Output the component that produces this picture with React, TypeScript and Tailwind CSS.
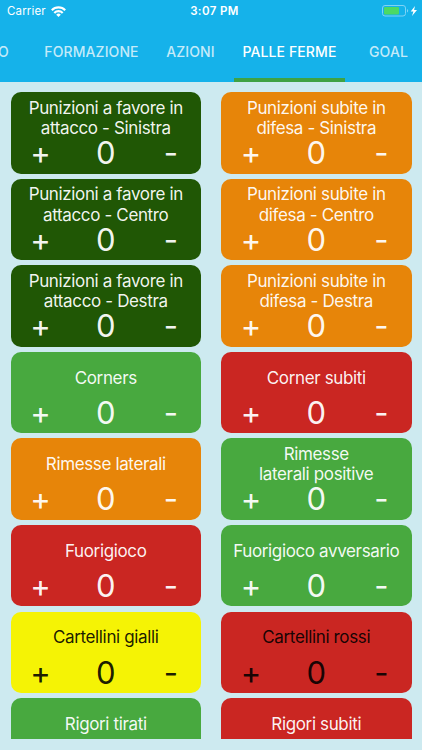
type Tone = "forest" | "green" | "orange" | "red" | "yellow";

type Counter = {
  title: string;
  tone: Tone;
  dark?: boolean;
};

const tones: Record<Tone, string> = {
  forest: "bg-[#205705]",
  green: "bg-[#48a93f]",
  orange: "bg-[#e78509]",
  red: "bg-[#ca2622]",
  yellow: "bg-[#f5f305]",
};

const counters: Counter[] = [
  { title: "Punizioni a favore in\nattacco - Sinistra", tone: "forest" },
  { title: "Punizioni subite in\ndifesa - Sinistra", tone: "orange" },
  { title: "Punizioni a favore in\nattacco - Centro", tone: "forest" },
  { title: "Punizioni subite in\ndifesa - Centro", tone: "orange" },
  { title: "Punizioni a favore in\nattacco - Destra", tone: "forest" },
  { title: "Punizioni subite in\ndifesa - Destra", tone: "orange" },
  { title: "Corners", tone: "green" },
  { title: "Corner subiti", tone: "red" },
  { title: "Rimesse laterali", tone: "orange" },
  { title: "Rimesse\nlaterali positive", tone: "green" },
  { title: "Fuorigioco", tone: "red" },
  { title: "Fuorigioco avversario", tone: "green" },
  { title: "Cartellini gialli", tone: "yellow", dark: true },
  { title: "Cartellini rossi", tone: "red", dark: true },
  { title: "Rigori tirati", tone: "green" },
  { title: "Rigori subiti", tone: "red" },
];

const tabs = ["FORMAZIONE", "AZIONI", "PALLE FERME", "GOAL"];

function StatusBar() {
  return (
    <div className="grid h-[23px] grid-cols-3 items-center pl-[7px] pr-1 text-[11.5px] text-white">
      <div className="flex items-center gap-[5px]">
        <span className="tracking-[0.15px]">Carrier</span>
        <svg
          className="-mt-px"
          width="15"
          height="11"
          viewBox="0 0 15 11"
          fill="none"
          stroke="white"
          strokeWidth="2.2"
        >
          <path d="M.8 4.200a9.400 9.400 0 0 1 13.400 0" />
          <path d="M3.300 6.900a5.900 5.900 0 0 1 8.400 0" />
          <path d="M7.500 10.900 5.200 8.700a3.300 3.300 0 0 1 4.600 0z" fill="white" stroke="none" />
        </svg>
      </div>
      <span className="pl-1 text-center font-semibold tracking-[0.4px]">3:07 PM</span>
      <div className="flex items-center justify-end">
        <svg className="-mt-px" width="36" height="12" viewBox="0 0 36 12">
          <rect x="0.5" y="0.5" width="23" height="10.500" rx="2.500" fill="none" stroke="#7fd3f5" />
          <rect x="2" y="2" width="15" height="7.500" rx="1" fill="#4cd964" />
          <path d="M25 4v3.600c1.600-.6 1.600-3 0-3.600z" fill="#7fd3f5" />
          <path d="M33 1l-4.300 5.600h2.700L30 11l5-6h-2.900z" fill="white" />
        </svg>
      </div>
    </div>
  );
}

function Tabs({ active }: { active: string }) {
  return (
    <nav className="flex flex-1 overflow-hidden text-[14px] font-medium tracking-[0.1px] text-white/75">
      <div className="flex w-[42px] shrink-0 items-center pb-0.5">
        <span className="-ml-[2px]">O</span>
      </div>
      {tabs.map((tab) => (
        <button
          key={tab}
          className={`relative flex w-[99px] shrink-0 items-center justify-center whitespace-nowrap pb-0.5 ${
            tab === active ? "text-white" : ""
          }`}
        >
          {tab}
          {tab === active && (
            <span className="absolute -inset-x-1.5 bottom-0 h-[4px] bg-[#3fa244]" />
          )}
        </button>
      ))}
    </nav>
  );
}

function CounterCard({ title, tone, dark }: Counter) {
  return (
    <div
      className={`flex h-[81.300px] flex-col rounded-[10px] ${tones[tone]} ${
        dark ? "text-black/90" : "text-white/95"
      }`}
    >
      <div className="flex h-[52px] items-center justify-center whitespace-pre text-center text-[17px] leading-[20.500px] tracking-[-0.360px]">
        {title}
      </div>
      <div className="-mt-px grid h-5 grid-cols-[60px_1fr_60px] items-center text-center text-[31px] leading-5">
        <button>+</button>
        <span>0</span>
        <button>-</button>
      </div>
    </div>
  );
}

export default function App() {
  return (
    <div className="flex h-[750px] w-[422px] flex-col overflow-hidden bg-[#cdeaf0] font-['Inter',sans-serif]">
      <header className="flex h-[81.500px] shrink-0 flex-col bg-[#15b2ea]">
        <StatusBar />
        <Tabs active="PALLE FERME" />
      </header>
      <main className="mb-[11px] grid min-h-0 flex-1 grid-cols-2 content-start gap-x-5 gap-y-[5.250px] overflow-hidden px-[10.500px] pt-[10.800px]">
        {counters.map((counter) => (
          <CounterCard key={counter.title} {...counter} />
        ))}
      </main>
    </div>
  );
}
